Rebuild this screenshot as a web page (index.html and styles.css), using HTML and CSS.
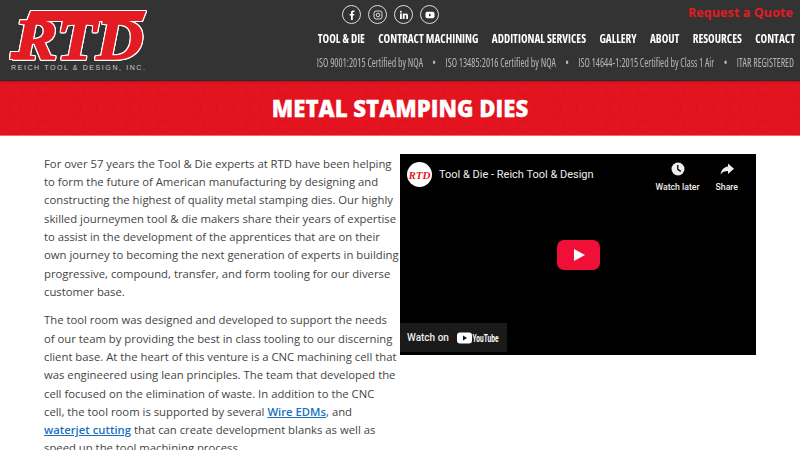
FILE: index.html
```html
<!DOCTYPE html>
<html lang="en">
  <head>
    <meta charset="utf-8" />
    <title>Metal Stamping Dies - Reich Tool &amp; Design</title>
    <link rel="stylesheet" href="styles.css">
  </head>
  <body>
    <header class="site-header">
      <a class="logo" href="#">
        <svg width="144" height="58" viewBox="0 0 144 58">
          <g class="logo-mark">
            <path d="M24 3H139L135 13H20Z" fill="#e31b23"/>
            <path d="M4 44H16L22 51H3Z" fill="#e31b23"/>
            <text class="logo-letters" x="7" y="51" textLength="129" lengthAdjust="spacingAndGlyphs">RTD</text>
          </g>
        </svg>
        <span class="logo-sub">REICH TOOL &amp; DESIGN, INC.</span>
      </a>
      <div class="header-right">
        <div class="top-row">
          <div class="social">
            <a href="#"><svg width="10" height="10" viewBox="0 0 10 10"><path d="M4 10V5.600H2.600V4H4V2.800C4 1.300 4.800.5 6.200.5H7.500V2H6.600C6 2 5.800 2.300 5.800 2.800V4H7.400L7.100 5.600H5.800V10Z" fill="#fff"/></svg></a>
            <a href="#"><svg width="10" height="10" viewBox="0 0 10 10" fill="none" stroke="#ddd"><rect x="1" y="1" width="8" height="8" rx="2.200"/><circle cx="5" cy="5" r="1.800"/></svg></a>
            <a href="#"><svg width="10" height="10" viewBox="0 0 10 10" fill="#fff"><rect x="1" y="3.500" width="1.800" height="5.500"/><circle cx="1.900" cy="1.700" r="1"/><path d="M3.800 3.500H5.500V4.300C6.500 3 9 3.100 9 5.600V9H7.200V6C7.200 4.700 5.600 4.800 5.600 6V9H3.800Z"/></svg></a>
            <a href="#"><svg width="10" height="10" viewBox="0 0 10 10"><rect x="0.500" y="1.800" width="9" height="6.400" rx="1.800" fill="#fff"/><path d="M4 3.500L6.400 5L4 6.500Z" fill="#333"/></svg></a>
          </div>
          <a class="quote" href="#">Request a Quote</a>
        </div>
        <nav class="main-nav">
          <a href="#">TOOL &amp; DIE</a>
          <a href="#">CONTRACT MACHINING</a>
          <a href="#">ADDITIONAL SERVICES</a>
          <a href="#">GALLERY</a>
          <a href="#">ABOUT</a>
          <a href="#">RESOURCES</a>
          <a href="#">CONTACT</a>
        </nav>
        <div class="certs">
          <span>ISO 9001:2015 Certified by NQA</span>
          <span class="dot">&bull;</span>
          <span>ISO 13485:2016 Certified by NQA</span>
          <span class="dot">&bull;</span>
          <span>ISO 14644-1:2015 Certified by Class 1 Air</span>
          <span class="dot">&bull;</span>
          <span>ITAR REGISTERED</span>
        </div>
      </div>
    </header>

    <section class="banner">
      <h1>METAL STAMPING DIES</h1>
    </section>

    <main class="content">
      <div class="copy">
        <p>For over 57 years the Tool &amp; Die experts at RTD have been helping to form the future of American manufacturing by designing and constructing the highest of quality metal stamping dies. Our highly skilled journeymen tool &amp; die makers share their years of expertise to assist in the development of the apprentices that are on their own journey to becoming the next generation of experts in building progressive, compound, transfer, and form tooling for our diverse customer base.</p>
        <p>The tool room was designed and developed to support the needs of our team by providing the best in class tooling to our discerning client base. At the heart of this venture is a CNC machining cell that was engineered using lean principles. The team that developed the cell focused on the elimination of waste. In addition to the CNC<br>cell, the tool room is supported by several <a href="#">Wire EDMs</a>, and<br><a href="#">waterjet cutting</a> that can create development blanks as well as speed up the tool machining process.</p>
      </div>
      <div class="video">
        <div class="video-top">
          <span class="channel-icon"><span>RTD</span></span>
          <span class="video-title">Tool &amp; Die - Reich Tool &amp; Design</span>
          <span class="video-action">
            <svg width="16" height="16" viewBox="0 0 16 16"><circle cx="8" cy="8" r="6.500" fill="#eee"/><path d="M7.800 4V8.300L10.800 10.400" fill="none" stroke="#000" stroke-width="1.300"/></svg>
            Watch later
          </span>
          <span class="video-action">
            <svg width="16" height="16" viewBox="0 0 16 16"><path d="M9 2.500L15 7.800L9 13V10C5.500 10 3 11 1.500 13.500C2 9.500 4.500 6 9 5.500Z" fill="#eee"/></svg>
            Share
          </span>
        </div>
        <div class="play">
          <svg width="43" height="30" viewBox="0 0 43 30"><rect width="43" height="30" rx="7" fill="#f00f36"/><path d="M17 9L28 15L17 21Z" fill="#fff"/></svg>
        </div>
        <div class="watch-on">
          <span>Watch on</span>
          <svg width="42" height="12" viewBox="0 0 42 12"><rect y="0.500" width="15" height="11" rx="3" fill="#fff"/><path d="M6 3.500L10 6L6 8.500Z" fill="#111"/><text class="yt-word" x="15.500" y="10" textLength="26" lengthAdjust="spacingAndGlyphs">YouTube</text></svg>
        </div>
      </div>
    </main>
  </body>
</html>
```

FILE: styles.css
```css
html, body {
  height: 450px;
  overflow: hidden;
}

body {
  margin: 0;
  background-color: #fff;
  color: #444;
  font-family: "Open Sans", sans-serif;
}

a {
  text-decoration: none;
}

.site-header {
  display: flex;
  justify-content: space-between;
  height: 80px;
  background-color: #333;
  border-bottom: 1px solid #2a2a2a;
}

.logo {
  display: block;
  padding: 8px 0 0 7px;
}

.logo svg {
  display: block;
}

.logo-mark {
  filter: drop-shadow(1px 0 0 #fff) drop-shadow(-1px 0 0 #fff) drop-shadow(0 1px 0 #fff) drop-shadow(0 -1px 0 #fff);
}

.logo-letters {
  font-family: "Liberation Serif", serif;
  font-weight: bold;
  font-style: italic;
  font-size: 58px;
  fill: #e31b23;
  stroke: #e31b23;
  stroke-width: 1.500px;
}

.logo-sub {
  display: block;
  margin: -2px 0 0 4px;
  font-family: "Liberation Sans", sans-serif;
  font-size: 7px;
  letter-spacing: 1.600px;
  color: #ccc;
  white-space: nowrap;
}

.header-right {
  width: 478px;
  padding-right: 5px;
}

.top-row {
  display: flex;
  justify-content: space-between;
  height: 28px;
  padding-left: 25px;
  padding-right: 2px;
}

.social {
  display: flex;
  gap: 7px;
  padding-top: 5px;
}

.social a {
  display: flex;
  align-items: center;
  justify-content: center;
  box-sizing: border-box;
  width: 19px;
  height: 19px;
  border: 1px solid #ddd;
  border-radius: 50%;
}

.quote {
  color: #e31b23;
  font-size: 12.500px;
  font-weight: 700;
  letter-spacing: 0.100px;
  line-height: 26px;
}

.main-nav {
  display: flex;
  justify-content: flex-end;
  gap: 15.500px;
  white-space: nowrap;
  transform: scaleX(0.86);
  transform-origin: right center;
}

.main-nav a {
  color: #fff;
  font-size: 13px;
  font-weight: 700;
  font-stretch: 75%;
  line-height: 20px;
}

.certs {
  display: flex;
  justify-content: flex-end;
  gap: 11.500px;
  margin-right: 1px;
  padding-top: 7px;
  color: #b5b5b5;
  font-size: 12px;
  font-stretch: 75%;
  line-height: 16px;
  white-space: nowrap;
  transform: scaleX(0.815);
  transform-origin: right center;
}

.banner {
  height: 54px;
  border-bottom: 1px solid #f4676c;
  background-color: #e3141f;
  background-image: url("data:image/svg+xml,%3Csvg xmlns='http://www.w3.org/2000/svg' width='60' height='36' fill='none' stroke='%23d5121d'%3E%3Ccircle cx='15' cy='9' r='9'/%3E%3Ccircle cx='45' cy='27' r='9'/%3E%3Ccircle cx='45' cy='9' r='6'/%3E%3Ccircle cx='15' cy='27' r='6'/%3E%3C/svg%3E");
  box-shadow: inset 0 3px 3px -2px #b3121a;
}

.banner h1 {
  margin: 0;
  color: #fff;
  font-size: 22.200px;
  font-weight: 800;
  -webkit-text-stroke: 0.300px #fff;
  line-height: 56px;
  text-align: center;
}

.content {
  display: flex;
  align-items: flex-start;
  padding: 18px 44px 0;
}

.copy {
  flex: none;
  box-sizing: border-box;
  width: 356px;
  padding-top: 0.800px;
  font-size: 11.300px;
  line-height: 18.290px;
}

.copy p {
  margin: 0 0 10.200px;
}

.copy a {
  color: #1a6fc0;
  font-weight: 600;
  text-decoration: underline;
}

.video {
  flex: none;
  position: relative;
  width: 356px;
  height: 201px;
  background-color: #000;
  color: #eee;
  font-family: Roboto, sans-serif;
}

.video-top {
  display: flex;
  align-items: flex-start;
  padding: 8px 18px 0 7px;
}

.channel-icon {
  display: flex;
  align-items: center;
  justify-content: center;
  width: 25px;
  height: 25px;
  border-radius: 50%;
  background-color: #fff;
}

.channel-icon span {
  color: #e31b23;
  font-family: "Liberation Serif", serif;
  font-size: 11px;
  font-style: italic;
  font-weight: bold;
}

.video-title {
  flex: 1;
  padding-left: 7px;
  font-size: 11px;
  line-height: 25px;
}

.video-action {
  display: flex;
  flex-direction: column;
  align-items: center;
  gap: 4px;
  margin: -1px 0 0 16px;
  font-size: 8.700px;
  font-weight: 500;
  line-height: 12px;
}

.play {
  position: absolute;
  top: 86px;
  left: 157px;
  height: 30px;
}

.play svg {
  display: block;
}

.watch-on {
  display: flex;
  align-items: center;
  gap: 8px;
  position: absolute;
  bottom: 3px;
  left: 0;
  box-sizing: border-box;
  width: 107px;
  height: 29px;
  padding-left: 7px;
  background-color: #1a1a1a;
  font-size: 10px;
  font-weight: 500;
  white-space: nowrap;
}

.yt-word {
  fill: #fff;
  font-size: 11px;
  font-weight: 700;
}
```
